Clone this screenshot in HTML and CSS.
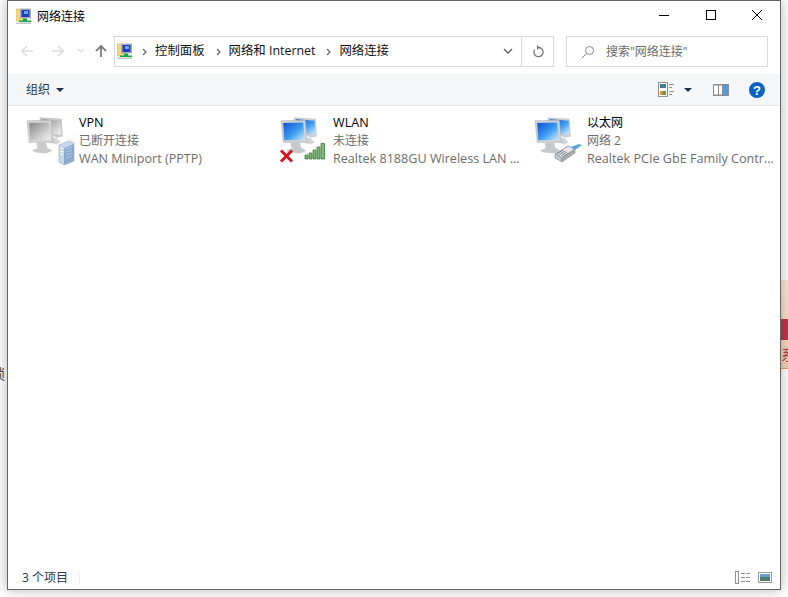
FILE: index.html
```html
<!DOCTYPE html>
<html lang="zh-CN">
<head>
    <meta charset="UTF-8">
    <title>网络连接</title>
    <link rel="stylesheet" href="styles.css">
</head>
<body>
    <svg class="defs" width="0" height="0">
        <defs>
            <linearGradient id="blueScreen" x1="0" y1="0" x2="1" y2="1">
                <stop offset="0" stop-color="#0f4fd8"/>
                <stop offset="0.55" stop-color="#3f9cf0"/>
                <stop offset="1" stop-color="#d5eefc"/>
            </linearGradient>
            <linearGradient id="greyScreen" x1="0" y1="0" x2="1" y2="1">
                <stop offset="0" stop-color="#858585"/>
                <stop offset="0.55" stop-color="#c4c4c4"/>
                <stop offset="1" stop-color="#f4f4f4"/>
            </linearGradient>
            <symbol id="pcsBlue" viewBox="0 0 40 40">
                <path d="M14 3l21 1.500 1 17-6 1-16-10z" fill="#c9ced2"/>
                <path d="M16 5l18 1.500 0.500 13-18.500-1z" fill="url(#blueScreen)"/>
                <path d="M22 22l8 1 4 4-4 2-10-3z" fill="#d2d5d7"/>
                <path d="M2 6.500l23-0.500 2 21-23 0z" fill="#cfd3d6" stroke="#b0b4b8" stroke-width="0.6"/>
                <path d="M4 8.500l19-0.500 1.500 16.500-19.500 0.500z" fill="url(#blueScreen)"/>
                <path d="M11 27l9 0 1 5 5 3-6 2.500-11-1-2-2 5-2z" fill="#c6cacd"/>
            </symbol>
            <symbol id="pcsGrey" viewBox="0 0 40 40">
                <path d="M14 3l21 1.500 1 17-6 1-16-10z" fill="#c9c9c9"/>
                <path d="M16 5l18 1.500 0.500 13-18.500-1z" fill="url(#greyScreen)"/>
                <path d="M22 22l8 1 4 4-4 2-10-3z" fill="#d5d5d5"/>
                <path d="M2 6.500l23-0.500 2 21-23 0z" fill="#d4d4d4" stroke="#b4b4b4" stroke-width="0.6"/>
                <path d="M4 8.500l19-0.500 1.500 16.500-19.500 0.500z" fill="url(#greyScreen)"/>
                <path d="M11 27l9 0 1 5 5 3-6 2.500-11-1-2-2 5-2z" fill="#cacaca"/>
            </symbol>
            <symbol id="netFolder" viewBox="0 0 16 16">
                <path d="M0 1h5l1 1h3v11H0z" fill="#f3d77e" stroke="#c9a94e" stroke-width="0.5"/>
                <rect x="4" y="0.500" width="11" height="10" fill="#a9adb3"/>
                <rect x="5.500" y="2" width="8" height="7" fill="#1c3fc2"/>
                <rect x="8" y="3" width="4" height="3" fill="#6fa6e8"/>
                <rect x="7" y="10.500" width="4" height="3" fill="#17a84b"/>
                <rect x="3" y="12.500" width="12" height="1.500" fill="#17a84b"/>
                <rect x="0" y="14.500" width="15" height="1.500" fill="#c2c5c8"/>
            </symbol>
        </defs>
    </svg>

    <div class="behind-left">锁</div>
    <div class="behind-right"><span class="behind-red"></span><span class="behind-text">系</span></div>

    <div class="window">
        <div class="titlebar">
            <svg class="title-icon" width="16" height="16"><use href="#netFolder"/></svg>
            <span class="title-text">网络连接</span>
            <div class="window-btns">
                <svg width="12" height="12" viewBox="0 0 12 12"><path d="M1 6.500h10" stroke="#000" fill="none"/></svg>
                <svg width="12" height="12" viewBox="0 0 12 12"><rect x="1.500" y="1.500" width="9" height="9" stroke="#000" fill="none"/></svg>
                <svg width="12" height="12" viewBox="0 0 12 12"><path d="M1 1l10 10M11 1L1 11" stroke="#000" fill="none"/></svg>
            </div>
        </div>

        <div class="navbar">
            <div class="nav-btns">
                <svg width="14" height="14" viewBox="0 0 14 14"><path d="M13 7H2M7 2L2 7l5 5" stroke="#dcdcdc" stroke-width="1.600" fill="none"/></svg>
                <svg class="nav-forward" width="14" height="14" viewBox="0 0 14 14"><path d="M1 7h11M7 2l5 5-5 5" stroke="#dcdcdc" stroke-width="1.600" fill="none"/></svg>
                <svg class="nav-down" width="8" height="6" viewBox="0 0 8 6"><path d="M1 1l3 3 3-3" stroke="#dcdcdc" stroke-width="1.200" fill="none"/></svg>
                <svg class="nav-up" width="14" height="14" viewBox="0 0 14 14"><path d="M7 13V2M2 7l5-5 5 5" stroke="#7d7d7d" stroke-width="1.800" fill="none"/></svg>
            </div>
            <div class="address">
                <svg class="addr-icon" width="16" height="16"><use href="#netFolder"/></svg>
                <svg class="crumb-sep" width="5" height="8" viewBox="0 0 5 8"><path d="M1 1l3 3-3 3" stroke="#666" stroke-width="1.200" fill="none"/></svg>
                <span class="crumb">控制面板</span>
                <svg class="crumb-sep" width="5" height="8" viewBox="0 0 5 8"><path d="M1 1l3 3-3 3" stroke="#666" stroke-width="1.200" fill="none"/></svg>
                <span class="crumb">网络和 Internet</span>
                <svg class="crumb-sep" width="5" height="8" viewBox="0 0 5 8"><path d="M1 1l3 3-3 3" stroke="#666" stroke-width="1.200" fill="none"/></svg>
                <span class="crumb">网络连接</span>
                <svg class="addr-chevron" width="10" height="7" viewBox="0 0 10 7"><path d="M1 1l4 4 4-4" stroke="#666" stroke-width="1.400" fill="none"/></svg>
                <div class="addr-refresh">
                    <svg width="12" height="13" viewBox="0 0 12 13"><path d="M7 2.500A4.600 4.600 0 1 1 2.700 4.500" stroke="#777" stroke-width="1.300" fill="none"/><path d="M5 0l3 2.500-3 2.500z" fill="#777"/></svg>
                </div>
            </div>
            <div class="search">
                <svg width="14" height="14" viewBox="0 0 14 14"><circle cx="8.500" cy="5.500" r="4" stroke="#888" fill="none"/><path d="M5.500 8.500L1 13" stroke="#888" fill="none"/></svg>
                <span class="search-text">搜索"网络连接"</span>
            </div>
        </div>

        <div class="toolbar">
            <span class="org">组织</span>
            <span class="caret"></span>
            <div class="toolbar-right">
                <svg width="16" height="15" viewBox="0 0 16 15">
                    <rect x="0.500" y="0.500" width="9" height="14" fill="#fff" stroke="#8f8f8f"/>
                    <rect x="2" y="2" width="6" height="4" fill="#3f7d9c"/>
                    <rect x="2" y="9" width="3" height="4" fill="#cf9a3a"/>
                    <rect x="5" y="9" width="3" height="4" fill="#5c9a4a"/>
                    <path d="M11 2.500h5M11 5.500h3M11 9.500h5M11 12.500h3" stroke="#8f8f8f"/>
                </svg>
                <span class="caret caret-views"></span>
                <svg class="pane-icon" width="16" height="12" viewBox="0 0 16 12">
                    <rect width="16" height="12" fill="#8d8d8d"/>
                    <rect x="1" y="1.500" width="4" height="9" fill="#fff"/>
                    <rect x="6" y="1.500" width="3" height="9" fill="#fff"/>
                    <rect x="10" y="1" width="5" height="10" fill="#4a9be8"/>
                </svg>
                <svg class="help-icon" width="16" height="16" viewBox="0 0 16 16">
                    <circle cx="8" cy="8" r="8" fill="#0a63c4"/>
                    <text x="8" y="12.500" class="help-mark" text-anchor="middle">?</text>
                </svg>
            </div>
        </div>

        <div class="content">
            <div class="conn">
                <div class="conn-icon">
                    <svg class="pcs" width="40" height="40"><use href="#pcsGrey"/></svg>
                    <svg class="badge-server" width="17" height="26" viewBox="0 0 17 26">
                        <path d="M1 5l10-4 5 2v18l-10 4-5-3z" fill="#c6d8ea" stroke="#8fa8c4" stroke-width="0.6"/>
                        <path d="M6 8l10-4v17l-10 4z" fill="#8aabcf"/>
                        <path d="M8 9l6-2M8 12l6-2M8 15l6-2M8 18l6-2" stroke="#b9cde2" stroke-width="0.8"/>
                        <path d="M2 8l3 1M2 11l3 1M2 14l3 1" stroke="#fff"/>
                    </svg>
                </div>
                <div class="conn-text">
                    <div class="conn-name">VPN</div>
                    <div class="conn-line cjk">已断开连接</div>
                    <div class="conn-line">WAN Miniport (PPTP)</div>
                </div>
            </div>
            <div class="conn">
                <div class="conn-icon">
                    <svg class="pcs" width="40" height="40"><use href="#pcsBlue"/></svg>
                    <svg class="badge-x" width="15" height="14" viewBox="0 0 15 14"><path d="M2 1.500l11 11M13 1.500l-11 11" stroke="#d8141c" stroke-width="3" fill="none"/></svg>
                    <svg class="badge-signal" width="22" height="18" viewBox="0 0 22 18">
                        <path d="M1 13h3v4H1zM5 11h3v6H5zM9 8h3v9H9zM13 5h3v12h-3zM17 1.500h3.500V17H17z" fill="#7dbb6e" stroke="#2a6f30" stroke-width="0.7"/>
                    </svg>
                </div>
                <div class="conn-text">
                    <div class="conn-name">WLAN</div>
                    <div class="conn-line cjk">未连接</div>
                    <div class="conn-line">Realtek 8188GU Wireless LAN 802.11n USB NIC</div>
                </div>
            </div>
            <div class="conn">
                <div class="conn-icon">
                    <svg class="pcs" width="40" height="40"><use href="#pcsBlue"/></svg>
                    <svg class="badge-plug" width="29" height="21" viewBox="0 0 29 21">
                        <path d="M1 12l13-8 7 3-13 9z" fill="#e4e7e9" stroke="#8a8e91" stroke-width="0.8"/>
                        <path d="M1 12l7 4v4l-7-4z" fill="#c4c8cb" stroke="#8a8e91" stroke-width="0.6"/>
                        <path d="M8 16l13-9v4L8 20z" fill="#a9adb0" stroke="#8a8e91" stroke-width="0.6"/>
                        <path d="M3 12l6-4M5 13l6-4M7 14l6-4M9 15l6-4" stroke="#7d8184"/>
                        <path d="M17 5l8-3 3 1-7 5z" fill="#5aa7d8"/>
                    </svg>
                </div>
                <div class="conn-text">
                    <div class="conn-name cjk">以太网</div>
                    <div class="conn-line cjk">网络 2</div>
                    <div class="conn-line">Realtek PCIe GbE Family Controller</div>
                </div>
            </div>
        </div>

        <div class="statusbar">
            <span class="item-count">3 个项目</span>
            <span class="status-sep"></span>
            <div class="status-right">
                <svg width="16" height="13" viewBox="0 0 16 13">
                    <rect x="0.500" y="0.500" width="3" height="12" fill="#fff" stroke="#8f8f8f"/>
                    <path d="M6 2.500h4M11 2.500h4M6 6.500h4M11 6.500h4M6 10.500h4M11 10.500h4" stroke="#8f8f8f"/>
                </svg>
                <svg width="14" height="11" viewBox="0 0 14 11">
                    <rect x="0.500" y="0.500" width="13" height="10" fill="#fff" stroke="#9a9a9a"/>
                    <rect x="2" y="2" width="10" height="3" fill="#6d9cd0"/>
                    <rect x="2" y="5" width="10" height="4" fill="#4c7f6a"/>
                </svg>
            </div>
        </div>
    </div>
</body>
</html>
```

FILE: styles.css
```css
html, body {
    height: 100%;
    margin: 0;
    overflow: hidden;
}
body {
    background: #fff;
    font-family: "Open Sans", "Noto Sans CJK SC", sans-serif;
    font-size: 12.6px;
    color: #1a1a1a;
    padding: 0 7px 7px;
    box-sizing: border-box;
}
.defs {
    position: absolute;
}
.behind-left {
    position: absolute;
    left: -9px;
    top: 363px;
    font-size: 14px;
    color: #444;
}
.behind-right {
    position: absolute;
    left: 781px;
    top: 280px;
    width: 7px;
    height: 88px;
    overflow: hidden;
    background: linear-gradient(#fbe9d6, #f2d2b4);
    border-bottom: 1px solid #e8a060;
}
.behind-red {
    display: block;
    margin-top: 39px;
    height: 21px;
    background: #c0344c;
}
.behind-text {
    display: block;
    margin-top: 3px;
    font-size: 15px;
    line-height: 22px;
    color: #b8404a;
}
.window {
    position: relative;
    height: 590px;
    box-sizing: border-box;
    background: #fff;
    border: 1px solid #666;
    box-shadow: 0 0 12px rgba(0, 0, 0, 0.3);
    display: flex;
    flex-direction: column;
}
.titlebar {
    height: 32px;
    display: flex;
    align-items: center;
    padding-left: 8px;
    flex: none;
}
.title-icon {
    margin-right: 5px;
    margin-bottom: 2px;
}
.title-text {
    font-size: 12px;
    color: #000;
    margin-bottom: 2px;
}
.window-btns {
    margin-left: auto;
    display: flex;
    gap: 34px;
    padding-right: 17px;
    padding-bottom: 4px;
}
.window-btns svg:first-child {
    margin-right: 1px;
}
.navbar {
    height: 41px;
    display: flex;
    align-items: flex-start;
    padding-top: 3px;
    box-sizing: border-box;
    flex: none;
}
.nav-btns {
    width: 106px;
    height: 30px;
    display: flex;
    align-items: center;
    padding-left: 12px;
    box-sizing: border-box;
}
.nav-forward {
    margin-left: 17px;
}
.nav-down {
    margin-left: 12px;
}
.nav-up {
    margin-left: 9px;
}
.address {
    width: 440px;
    height: 31px;
    box-sizing: border-box;
    border: 1px solid #d9d9d9;
    display: flex;
    align-items: center;
    padding-left: 2px;
}
.addr-icon {
    margin-right: 9px;
    margin-bottom: 2px;
}
.crumb-sep {
    margin-right: 8px;
}
.crumb {
    margin-right: 11px;
    color: #111;
    font-size: 12.4px;
    padding-bottom: 3px;
}
.addr-chevron {
    margin-left: auto;
    margin-right: 8px;
}
.addr-refresh {
    width: 31px;
    height: 100%;
    border-left: 1px solid #d9d9d9;
    display: flex;
    align-items: center;
    justify-content: center;
}
.search {
    width: 202px;
    height: 31px;
    margin-left: 12px;
    box-sizing: border-box;
    border: 1px solid #d9d9d9;
    display: flex;
    align-items: center;
    padding-left: 14px;
    gap: 11px;
}
.search-text {
    color: #6d6d6d;
    font-size: 12px;
    padding-bottom: 2px;
}
.toolbar {
    height: 32px;
    background: #f5f6f7;
    border-bottom: 1px solid #e6e6e6;
    display: flex;
    align-items: center;
    padding-left: 18px;
    box-sizing: border-box;
    flex: none;
}
.org {
    color: #2b3a50;
    font-size: 12px;
    padding-bottom: 2px;
}
.caret {
    width: 0;
    height: 0;
    margin-left: 6px;
    border-left: 4px solid transparent;
    border-right: 4px solid transparent;
    border-top: 4px solid #1f2f4a;
}
.toolbar-right {
    margin-left: auto;
    display: flex;
    align-items: center;
    padding-right: 15px;
}
.caret-views {
    margin-left: 10px;
}
.pane-icon {
    margin-left: 21px;
}
.help-icon {
    margin-left: 20px;
}
.help-mark {
    font-family: "Liberation Sans", sans-serif;
    font-size: 13px;
    font-weight: bold;
    fill: #fff;
}
.content {
    flex: 1;
    display: flex;
    align-items: flex-start;
    padding: 8px 0 0 17px;
}
.conn {
    width: 254px;
    display: flex;
    flex: none;
}
.conn-icon {
    position: relative;
    width: 48px;
    height: 52px;
    margin-right: 6px;
    flex: none;
}
.pcs {
    display: block;
    width: 42px;
    height: 42px;
}
.badge-server {
    position: absolute;
    left: 33px;
    top: 26px;
}
.badge-x {
    position: absolute;
    left: 0;
    top: 35px;
}
.badge-signal {
    position: absolute;
    left: 25px;
    top: 28px;
}
.badge-plug {
    position: absolute;
    left: 21px;
    top: 28px;
}
.conn-text {
    width: 189px;
}
.conn-name {
    height: 18px;
    line-height: 18px;
    color: #000;
}
.conn-line {
    height: 18px;
    line-height: 18px;
    color: #6d6d6d;
    white-space: nowrap;
    overflow: hidden;
    text-overflow: ellipsis;
}
.cjk {
    font-size: 12px;
}
.statusbar {
    height: 23px;
    display: flex;
    align-items: center;
    padding-left: 14px;
    flex: none;
}
.item-count {
    font-size: 12px;
    color: #2b3a50;
    padding-bottom: 2px;
}
.status-sep {
    width: 1px;
    height: 14px;
    margin-left: 11px;
    background: #efefef;
}
.status-right {
    margin-left: auto;
    display: flex;
    align-items: center;
    gap: 7px;
    padding-right: 8px;
}
```
